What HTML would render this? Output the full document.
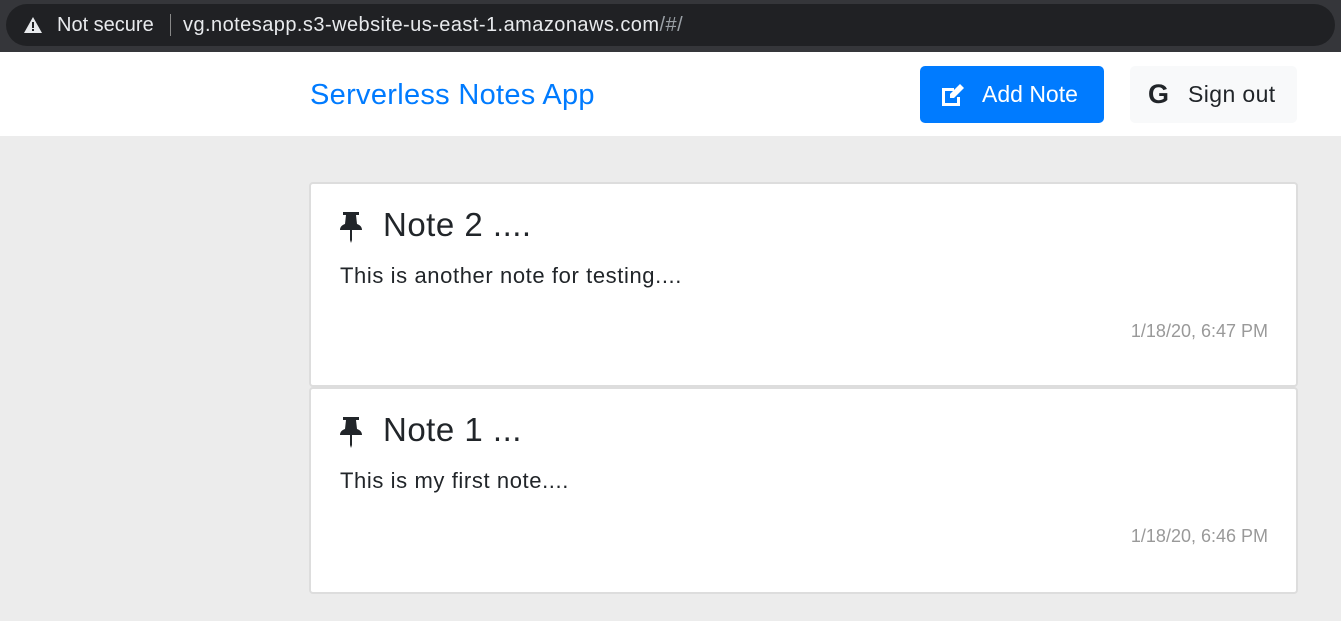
<!DOCTYPE html>
<html><head><meta charset="utf-8"><style>
*{box-sizing:border-box;margin:0;padding:0}
body{width:1341px;height:621px;overflow:hidden;background:#ececec;font-family:"Liberation Sans",sans-serif;position:relative}
.bar{position:absolute;left:0;top:0;width:1341px;height:52px;background:#35363a}
.pill{position:absolute;left:6px;top:4px;width:1329px;height:42px;background:#202124;border-radius:21px;color:#e8eaed;font-size:20px;line-height:42px}
.nav{position:absolute;left:0;top:52px;width:1341px;height:84px;background:#fff}
.brand{position:absolute;left:310px;top:26px;font-size:29px;color:#007bff;line-height:34px;letter-spacing:0.3px}
.btn{position:absolute;top:14px;height:57px;border-radius:5px;font-size:23px;line-height:57px}
.card{position:absolute;left:309px;width:989px;background:#fff;border:2px solid #ddd;border-radius:4px}
.t{position:absolute;left:28px;font-size:33px;color:#212529;letter-spacing:0.5px}
.p{position:absolute;left:29px;font-size:22px;color:#212529;letter-spacing:0.6px}
.d{position:absolute;right:28px;font-size:18px;color:#999}
</style></head><body>
<div class="bar"><div class="pill">
<svg style="position:absolute;left:18px;top:13px" width="18" height="16" viewBox="0 0 18 16"><path d="M9 0L18 16H0Z" fill="#e8eaed"/><rect x="8" y="5" width="2" height="6" fill="#202124"/><rect x="8" y="12" width="2" height="2" fill="#202124"/></svg>
<span style="position:absolute;left:51px">Not secure</span>
<span style="position:absolute;left:164px;top:10px;width:1px;height:22px;background:#888"></span>
<span style="position:absolute;left:177px;letter-spacing:0.45px">vg.notesapp.s3-website-us-east-1.amazonaws.com<span style="color:#9aa0a6">/#/</span></span>
</div></div>
<div class="nav">
<div class="brand">Serverless Notes App</div>
<div class="btn" style="left:920px;width:184px;background:#007bff;color:#fff">
<svg style="position:absolute;left:20px;top:17px" width="28" height="24" viewBox="0 0 28 24"><path d="M2 5h12v3H5v12h12v-6h3v9H2z" fill="#fff"/><path d="M10 11L20 1l4 4-10 10H10z" fill="#fff"/></svg>
<span style="position:absolute;left:62px">Add Note</span></div>
<div class="btn" style="left:1130px;width:167px;background:#f8f9fa;color:#212529">
<span style="position:absolute;left:18px;font-weight:bold;font-size:27px">G</span>
<span style="position:absolute;left:58px;letter-spacing:0.4px">Sign out</span></div>
</div>
<div class="card" style="top:182px;height:205px">
<svg style="position:absolute;left:28px;top:28px" width="24" height="32" viewBox="0 0 24 32"><path d="M4 0h16v3h-3l1 9c3 1 5 3 5 6H1c0-3 2-5 5-6l1-9H4z M11 18h2v10l-1 3-1-3z" fill="#212529"/></svg>
<div class="t" style="left:72px;top:22px">Note 2 ....</div>
<div class="p" style="top:79px">This is another note for testing....</div>
<div class="d" style="top:137px">1/18/20, 6:47 PM</div>
</div>
<div class="card" style="top:387px;height:207px">
<svg style="position:absolute;left:28px;top:28px" width="24" height="32" viewBox="0 0 24 32"><path d="M4 0h16v3h-3l1 9c3 1 5 3 5 6H1c0-3 2-5 5-6l1-9H4z M11 18h2v10l-1 3-1-3z" fill="#212529"/></svg>
<div class="t" style="left:72px;top:22px">Note 1 ...</div>
<div class="p" style="top:79px">This is my first note....</div>
<div class="d" style="top:137px">1/18/20, 6:46 PM</div>
</div>
</body></html>
